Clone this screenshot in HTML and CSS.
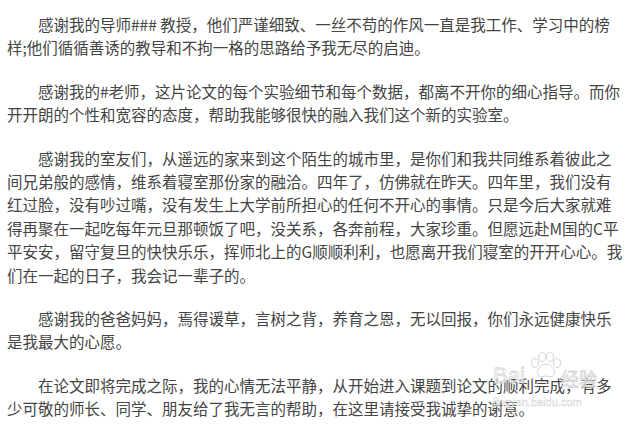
FILE: index.html
```html
<!DOCTYPE html>
<html lang="zh-CN">
<head>
<meta charset="utf-8">
<title>致谢</title>
<link rel="stylesheet" href="styles.css">
</head>
<body>
<div class="article">
  <p class="para">感谢我的导师### 教授，他们严谨细致、一丝不苟的作风一直是我工作、学习中的榜<br>样;他们循循善诱的教导和不拘一格的思路给予我无尽的启迪。</p>
  <p class="para">感谢我的#老师，这片论文的每个实验细节和每个数据，都离不开你的细心指导。而你<br>开开朗的个性和宽容的态度，帮助我能够很快的融入我们这个新的实验室。</p>
  <p class="para">感谢我的室友们，从遥远的家来到这个陌生的城市里，是你们和我共同维系着彼此之<br>间兄弟般的感情，维系着寝室那份家的融洽。四年了，仿佛就在昨天。四年里，我们没有<br>红过脸，没有吵过嘴，没有发生上大学前所担心的任何不开心的事情。只是今后大家就难<br>得再聚在一起吃每年元旦那顿饭了吧，没关系，各奔前程，大家珍重。但愿远赴M国的C平<br>平安安，留守复旦的快快乐乐，挥师北上的G顺顺利利，也愿离开我们寝室的开开心心。我<br>们在一起的日子，我会记一辈子的。</p>
  <p class="para">感谢我的爸爸妈妈，焉得谖草，言树之背，养育之恩，无以回报，你们永远健康快乐<br>是我最大的心愿。</p>
  <p class="para">在论文即将完成之际，我的心情无法平静，从开始进入课题到论文的顺利完成，有多<br>少可敬的师长、同学、朋友给了我无言的帮助，在这里请接受我诚挚的谢意。</p>
</div>
<div class="watermark">
  <svg class="paw" width="34" height="26" viewBox="0 0 34 26">
    <g fill="rgba(255,255,255,0.75)" stroke="#d6d6d6" stroke-width="1">
      <ellipse cx="6" cy="11" rx="3.5" ry="4.5"/>
      <ellipse cx="13" cy="5" rx="3.5" ry="4.5"/>
      <ellipse cx="21" cy="5" rx="3.5" ry="4.5"/>
      <ellipse cx="28" cy="11" rx="3.5" ry="4.5"/>
      <path d="M17 12 C11 12 7 20 9 23 C11 26 15 24 17 24 C19 24 23 26 25 23 C27 20 23 12 17 12 Z"/>
    </g>
  </svg>
  <span class="wm-bai">Bai</span><span class="wm-du">du</span><span class="wm-jy">经验</span>
  <span class="wm-url">jingyan.baidu.com</span>
</div>
</body>
</html>
```

FILE: styles.css
```css
html, body {
  margin: 0;
  padding: 0;
  background: #ffffff;
}
body {
  width: 640px;
  height: 426px;
  overflow: hidden;
  position: relative;
  font-family: "Noto Sans CJK SC", "Microsoft YaHei", sans-serif;
}
.article {
  padding: 13px 0 0 7px;
}
.para {
  margin: 0 0 20px 0;
  font-size: 15.5px;
  line-height: 23.4px;
  color: #444444;
  text-indent: 2em;
  white-space: nowrap;
}
.watermark {
  position: absolute;
  left: 493px;
  top: 352px;
  width: 120px;
  height: 58px;
}
.paw {
  position: absolute;
  left: 36px;
  top: 0;
}
.wm-bai, .wm-du, .wm-jy {
  position: absolute;
  top: 12px;
  font-family: "Liberation Sans", sans-serif;
  font-size: 22px;
  line-height: 24px;
  color: rgba(255, 255, 255, 0.7);
  -webkit-text-stroke: 0.8px #d4d4d4;
}
.wm-bai { left: 0; }
.wm-du { display: none; }
.wm-jy {
  left: 68px;
  font-family: "Noto Sans CJK SC", sans-serif;
  font-size: 18px;
  top: 14px;
}
.wm-url {
  position: absolute;
  left: 0;
  top: 44px;
  font-family: "Liberation Sans", sans-serif;
  font-size: 11px;
  line-height: 12px;
  color: rgba(255, 255, 255, 0.7);
  -webkit-text-stroke: 0.5px #d8d8d8;
}
```
